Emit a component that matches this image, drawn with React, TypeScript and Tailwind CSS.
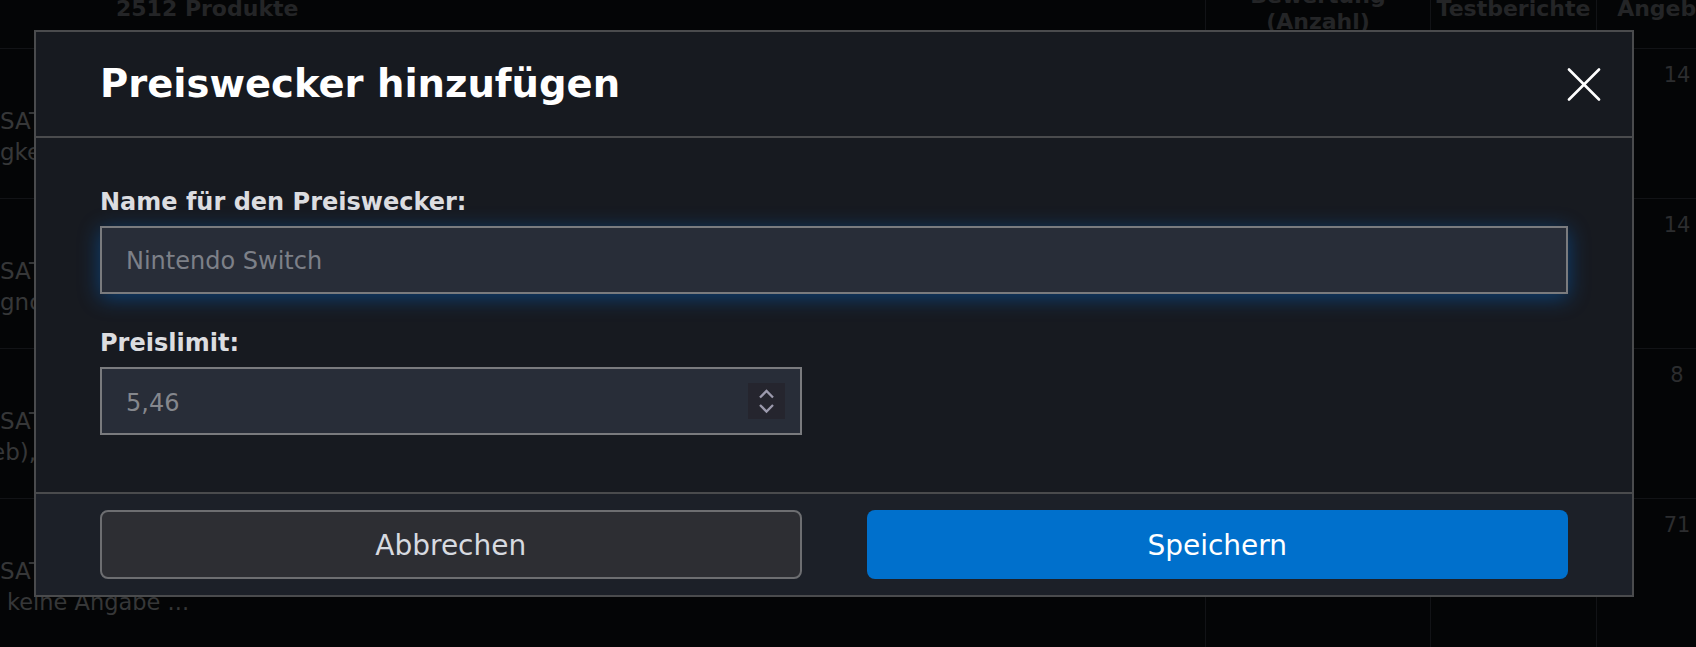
const rows = [
  { lines: ['SAT-Receiver HD, Twin-Tuner', 'gkeit: 4K UHD, HDMI'], offers: '14' },
  { lines: ['SAT>IP Server, 4 Tuner', 'gnose: WLAN, LAN'], offers: '14' },
  { lines: ['SAT-Finder digital', 'eb), Kabel, Koax'], offers: '8', shift: true },
  { lines: ['SAT-Anlage komplett', 'keine Angabe ...'], offers: '71', indent: true },
]

function CloseIcon() {
  return (
    <svg width="34" height="33" viewBox="0 0 34 33" fill="none">
      <line x1="2" y1="1.5" x2="32" y2="31.5" stroke="white" strokeWidth="2.6" strokeLinecap="round" />
      <line x1="32" y1="1.5" x2="2" y2="31.5" stroke="white" strokeWidth="2.6" strokeLinecap="round" />
    </svg>
  )
}

function Spinner() {
  return (
    <div className="flex h-[36px] w-[37px] items-center justify-center bg-[#25252e]">
      <svg width="37" height="36" viewBox="0 0 37 36" fill="none">
        <polyline points="12,14.5 18.5,8 25,14.5" stroke="#9c9aad" strokeWidth="2.3" />
        <polyline points="12,22 18.5,28.5 25,22" stroke="#9c9aad" strokeWidth="2.3" />
      </svg>
    </div>
  )
}

export default function App() {
  return (
    <div className="relative h-[647px] w-full overflow-hidden bg-[#040506] font-['DejaVu_Sans','Liberation_Sans',sans-serif]">
      {/* table behind the dialog */}
      <div className="grid w-[1757px] grid-cols-[1206px_225px_166px_160px]">
        <div className="-mt-[31px] flex h-[80px] items-center border-b border-r border-[#121316] pl-[116px] text-[22px] font-bold text-[#242527]">
          2512 Produkte
        </div>
        <div className="-mt-[31px] flex h-[80px] items-center justify-center border-b border-r border-[#121316] text-center text-[22px] font-bold leading-[26px] text-[#242527]">
          Bewertung
          <br />
          (Anzahl)
        </div>
        <div className="-mt-[31px] flex h-[80px] items-center justify-center border-b border-r border-[#121316] text-[22px] font-bold text-[#242527]">
          Testberichte
        </div>
        <div className="-mt-[31px] flex h-[80px] items-center justify-center border-b border-[#121316] text-[22px] font-bold text-[#242527]">
          Angebote
        </div>
        {rows.map((r, i) => (
          <div key={i} className="contents">
            <div className="h-[150px] overflow-hidden whitespace-nowrap border-b border-r border-[#121316] pt-[57px] text-[23px] leading-[31px] text-[#363738]">
              <div>{r.lines[0]}</div>
              <div className={r.shift ? '-ml-[9px]' : r.indent ? 'pl-[7px] text-[22.5px]' : ''}>{r.lines[1]}</div>
            </div>
            <div className="h-[150px] border-b border-r border-[#121316]" />
            <div className="h-[150px] border-b border-r border-[#121316]" />
            <div className="h-[150px] border-b border-[#121316] pt-[14px] text-center text-[21px] leading-[24px] text-[#2c2d2f]">
              {r.offers}
            </div>
          </div>
        ))}
      </div>

      {/* dialog */}
      <div className="absolute inset-0">
        <div className="ml-[34px] mt-[30px] flex h-[567px] w-[1600px] flex-col border-2 border-[#4a4b4d] bg-[#171a20]">
          <div className="flex h-[106px] shrink-0 items-center justify-between border-b-2 border-[#4a4b4d] pl-16 pr-[31px]">
            <h2 className="text-[38.5px] font-bold leading-none text-white">Preiswecker hinzufügen</h2>
            <button className="flex h-[34px] w-[34px] items-center justify-center" aria-label="Schließen">
              <CloseIcon />
            </button>
          </div>

          <div className="flex flex-1 flex-col px-16 pt-[50px]">
            <label className="mb-[10px] text-[24px] font-bold leading-[28px] text-[#dcdde0]">
              Name für den Preiswecker:
            </label>
            <input
              className="h-[68px] border-2 border-[#7a7b7e] bg-[#282d38] px-[24px] pt-[2px] text-[24px] text-white shadow-[0_4px_20px_rgba(0,110,220,0.45)] outline-none placeholder:text-[#7d8088]"
              placeholder="Nintendo Switch"
            />
            <label className="mb-[10px] mt-[35px] text-[24px] font-bold leading-[28px] text-[#dcdde0]">
              Preislimit:
            </label>
            <div className="grid grid-cols-2 gap-[65px]">
              <div className="flex h-[68px] items-center border-2 border-[#7a7b7e] bg-[#282d38] pl-[24px] pr-[15px]">
                <input
                  className="min-w-0 flex-1 bg-transparent pt-[3px] text-[24px] text-white outline-none placeholder:text-[#85878d]"
                  placeholder="5,46"
                />
                <Spinner />
              </div>
            </div>
          </div>

          <div className="grid h-[103px] shrink-0 grid-cols-2 gap-[65px] border-t-2 border-[#4a4b4d] bg-[#1c2028] px-16 py-4">
            <button className="rounded-[8px] border-2 border-[#6d6e71] bg-[#2d2e33] pt-[3px] text-[28px] text-[#d7dae0]">
              Abbrechen
            </button>
            <button className="rounded-[8px] bg-[#0070cc] pt-[3px] text-[28px] text-white">Speichern</button>
          </div>
        </div>
      </div>
    </div>
  )
}
